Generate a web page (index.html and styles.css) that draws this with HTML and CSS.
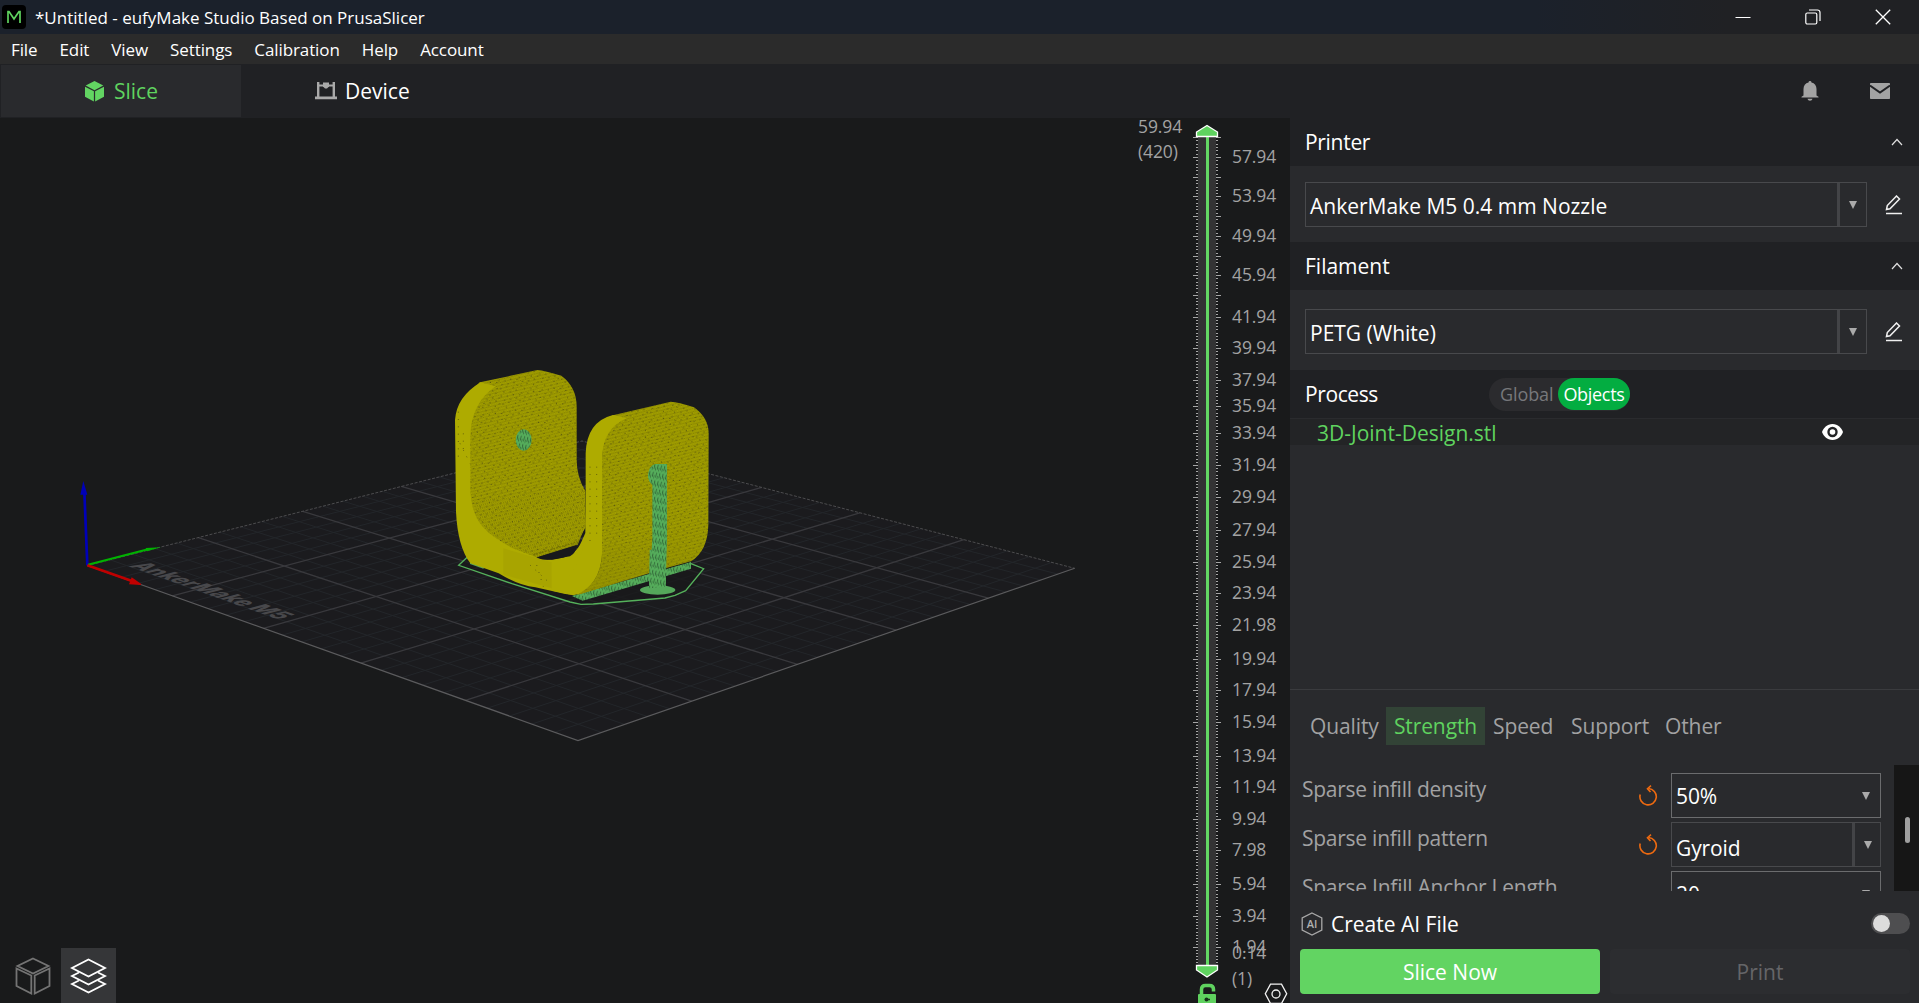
FILE: index.html
```
<!DOCTYPE html>
<html lang="en">
<head>
<meta charset="utf-8">
<title>*Untitled - eufyMake Studio Based on PrusaSlicer</title>
<link rel="stylesheet" href="styles.css">
</head>
<body>
<div class="app">
  <header class="titlebar">
    <svg class="logo" width="24" height="24" viewBox="0 0 24 24"><rect width="24" height="24" rx="4" fill="#000"/><path d="M6 18V6.500h1L12 14l5-7.500h1V18" fill="none" stroke="#5fd35f" stroke-width="1.700"/></svg>
    <span class="title">*Untitled - eufyMake Studio Based on PrusaSlicer</span>
    <div class="window-buttons">
      <svg width="16" height="16" viewBox="0 0 16 16"><path d="M0.500 8.500h15" stroke="#fff"/></svg>
      <svg width="16" height="16" viewBox="0 0 16 16" fill="none" stroke="#fff" stroke-width="1.200"><rect x=".8" y="4" width="11" height="11" rx="1.500"/><path d="M4 1h8.500a2.500 2.500 0 0 1 2.500 2.500V12"/></svg>
      <svg width="16" height="16" viewBox="0 0 16 16"><path d="M.8.8l14.400 14.400M15.200.8L.8 15.200" stroke="#fff" stroke-width="1.300"/></svg>
    </div>
  </header>
  <nav class="menubar">
    <span>File</span><span>Edit</span><span>View</span><span>Settings</span><span>Calibration</span><span>Help</span><span>Account</span>
  </nav>
  <div class="tabbar">
    <div class="tab tab-active">
      <svg width="19" height="21" viewBox="0 0 19 21" fill="#62d462"><path d="M9.500 0L18.300 4.600 9.500 9.200.7 4.600z"/><path d="M0 5.800l8.900 4.500V20.500L0 15.800z"/><path d="M19 5.800l-8.900 4.500V20.500l8.900-4.700z"/></svg>
      <span>Slice</span>
    </div>
    <div class="tab tab-device">
      <svg width="22" height="18" viewBox="0 0 22 18" fill="#a9a9a9"><path d="M2 0h2.400v15H2zM17.600 0H20v15h-2.400zM0 14.500h22v2.700H0zM3 2.600h16v2H3z"/><path d="M8 .5h6v4l-2 2h-2l-2-2z"/></svg>
      <span>Device</span>
    </div>
    <div class="tab-actions">
      <svg width="18" height="20" viewBox="0 0 18 20" fill="#a3a3a3"><path d="M9 0a1.500 1.500 0 0 1 1.500 1.400C13.700 2 15.500 4.500 15.500 8v6.500l2 1.300v.7H.5v-.7l2-1.300V8C2.500 4.500 4.300 2 7.500 1.400A1.500 1.500 0 0 1 9 0zM6.500 17.800h5c-.3 1.200-1.200 1.900-2.500 1.900s-2.200-.7-2.500-1.900z"/></svg>
      <svg width="20" height="16" viewBox="0 0 20 16"><rect width="20" height="16" rx=".8" fill="#a3a3a3"/><path d="M0 2.500l10 7 10-7" fill="none" stroke="#202124" stroke-width="1.900"/></svg>
    </div>
  </div>
  <main class="workspace">
    <section class="viewport">
      <svg class="scene" width="1290" height="885" viewBox="0 118 1290 885">
        <defs>
          <pattern id="dots" width="15" height="9" patternUnits="userSpaceOnUse" patternTransform="rotate(-14)">
            <rect width="15" height="9" fill="#a5a200"/>
            <path d="M0 0h3v3h-3zM5 0h3v3h-3zM10 0h3v3h-3z" fill="#827f00"/>
            <path d="M2.500 4.500h3v3h-3zM7.500 4.500h3v3h-3zM12.500 4.500h2.500v3h-2.500z" fill="#8b8800"/>
          </pattern>
          <pattern id="specks" width="62" height="47" patternUnits="userSpaceOnUse" patternTransform="rotate(-9)">
            <path d="M4 5h3v3h-3zM22 2h3v3h-3zM41 8h3v3h-3zM55 3h3v3h-3zM12 16h3v3h-3zM31 19h3v3h-3zM49 17h3v3h-3zM2 28h3v3h-3zM20 31h3v3h-3zM38 29h3v3h-3zM57 32h3v3h-3zM10 41h3v3h-3zM28 42h3v3h-3zM46 40h3v3h-3z" fill="#4d4a10"/>
          </pattern>
          <pattern id="shade" width="6" height="9" patternUnits="userSpaceOnUse" patternTransform="rotate(-14)">
            <rect width="6" height="9" fill="#a6a300"/><path d="M0 0h3v5H0zM4 5h2v3H4z" fill="#827f00"/>
          </pattern>
          <pattern id="mesh" width="10" height="24" patternUnits="userSpaceOnUse" patternTransform="rotate(12)">
            <rect width="10" height="24" fill="#55ad5b"/><path d="M0 2h3v15H0zM5 11h2v11H5z" fill="#356d3b"/>
          </pattern>
          <linearGradient id="fold" x1="0" y1="0" x2="0" y2="1"><stop offset="0" stop-color="#8a8700" stop-opacity="0"/><stop offset="1" stop-color="#8a8700" stop-opacity=".45"/></linearGradient>
        </defs>
        <path d="M87.300 565.500L582 441l492.700 127.300L578 740.500z" fill="#1b1b1e"/>
        <g id="bed-minor" stroke="#23262a" stroke-width="1"></g>
        <g id="bed-major" stroke="#39393d" stroke-width="1.300"></g>
        <path d="M87.300 565.500L582 441l492.700 127.300" fill="none" stroke="#4c4c4e" stroke-dasharray="3 1.500"/>
        <path d="M87.300 565.500L578 740.500l496.700-172.200" fill="none" stroke="#5b5b5d" stroke-width="1.200"/>
        <text class="bed-name" transform="matrix(.942 .335 -.969 .25 128 566)" textLength="160" lengthAdjust="spacingAndGlyphs">AnkerMake M5</text>
        <g transform="translate(60 460) scale(.33333)">
          <path d="M82 316L73 95" stroke="#0000b8" stroke-width="8"/><path d="M70 63l-9 41h21z" fill="#0000b8"/>
          <path d="M84 314l180-46" stroke="#00b400" stroke-width="6"/><path d="M257 264l46-2-42 12z" fill="#00b400"/>
          <path d="M82 316l136 48" stroke="#c00000" stroke-width="8"/><path d="M215 352l29 20-2 3-35-2z" fill="#c00000"/>
        </g>
        <g transform="translate(430 350) scale(.33333)">
          <path d="M122 612L85 648l115 36 220 72 30 7h40l215-19 60-17 40-30 16-44-42-15" fill="#19191b" opacity=".75"/>
          <path d="M122 612L86 646l160 55 174 55 33 7 37-1 215-18 30-8 32-14 54-66-40-16" fill="none" stroke="#55b15b" stroke-width="4"/>
          <path d="M120 630l50 14-10 12-40-14z" fill="#55a85b"/>
          <path d="M425 738l358-102v20L458 752z" fill="url(#mesh)"/>
          <path id="left-plate" d="M150 97L322 60q22 2 72 17 46 34 46 93v160q0 50 26 93v110l-28 50-118 38-80-2q-150-60-155-180V260q0-100 64-163z" fill="url(#dots)"/>
          <path d="M130 455Q250 420 462 425l5 100-24 60-120 36-60-12q-110-50-133-154z" fill="url(#shade)" opacity=".8"/>
          <use href="#left-plate" class="speckled"/>
          <path d="M160 100L322 60q22 2 72 17 46 34 46 93v160q0 50 26 93v110l-28 50-118 38-80-2q-150-60-155-180V260q0-100 64-163z" fill="url(#specks)"/>
          <path d="M152 97l45 12q-74 50-76 150v160c5 105 50 130 125 175l90 34 30 1c75-9 80-35 100-80l1-120V310q3-95 82-115l43 10q-72 30-76 120v280q-2 80-60 125-20 7-50 2l-90-20q-50-5-110-42l-85-30Q83 590 78 485L75 210q5-70 77-113z" fill="#aeab00"/>
          <path d="M320 623l120-38q-2 25-20 34l-50 9q-30 4-50-5z" fill="#18181c"/>
          <path d="M310 615l132-40" stroke="#777400" stroke-width="5" stroke-dasharray="5 4"/>
          <path d="M552 195l170-40q22 1 70 17 44 32 44 78l-1 275q-2 78-52 109l-75 20L440 736q70-35 76-120V325q0-70 36-130z" fill="url(#dots)"/>
          <path d="M552 195l170-40q22 1 70 17 44 32 44 78l-1 275q-2 78-52 109l-75 20L440 736q70-35 76-120V325q0-70 36-130z" fill="url(#specks)"/>
          <path d="M516 590l316-60q-6 78-60 106L442 734q72-46 74-144z" fill="url(#fold)"/>
          <path d="M552 195l38 10q-72 30-74 120v285q-5 100-86 126l-60-13q80-55 98-170V325q5-105 84-130z" fill="#aeab00"/>
          <path d="M220 595l145 42v78L220 674z" fill="#9f9c00" opacity=".4"/>
          <path d="M85 185v140M100 250v60M480 350v230M500 350v210M90 280l30 60M300 645l60 55M320 645l20 65" stroke="#67640a" stroke-width="3" stroke-dasharray="3 19"/>
          <ellipse cx="281" cy="270" rx="24" ry="32" fill="url(#mesh)"/>
          <path d="M676 342h35v230l-4 140q-26 16-48-2l8-145V405q-14-14-13-30 3-28 22-33z" fill="url(#mesh)"/>
          <ellipse cx="683" cy="720" rx="53" ry="14" fill="#55a85b"/>
          <path d="M659 600l48-10v120l-50 5z" fill="url(#mesh)"/>
        </g>
        <rect x="1198" y="137" width="18" height="828" fill="#333334"/>
        <g id="ruler-ticks" stroke="#a6a6a6" stroke-width="1"></g>
        <rect x="1206" y="137" width="3" height="828" fill="#64d864"/>
        <path d="M1196.500 136.500v-4.500l10.500-6.500 10.500 6.500v4.500z" fill="#5fd25f" stroke="#fff" stroke-width="1.300"/>
        <path d="M1196.500 965.500v4.500l10.500 7 10.500-7v-4.500z" fill="#5fd25f" stroke="#fff" stroke-width="1.300"/>
        <g class="scale-text" id="scale-text">
          <text x="1138" y="133">59.94</text><text x="1138" y="158">(420)</text>
          <text x="1232" y="959">0.14</text><text x="1232" y="985">(1)</text>
        </g>
        <g fill="none" stroke="#5fd25f" stroke-width="3.500"><path d="M1201.500 996v-6.500q0-4 4-4h4q4 0 4 4v2"/></g>
        <rect x="1198" y="994" width="18" height="12" rx="1" fill="#5fd25f"/><circle cx="1206.500" cy="999.500" r="2" fill="#17301a"/><path d="M1206.500 999.500h3.500" stroke="#17301a" stroke-width="1.500"/>
        <path d="M1270.500 984.200h11l5.200 9.600-5.200 9.700h-11l-5.200-9.700z" fill="none" stroke="#f2f2f2" stroke-width="1.300"/><circle cx="1276" cy="994" r="4" fill="none" stroke="#f2f2f2" stroke-width="1.300"/>
      </svg>
      <div class="view-modes">
        <div class="mode"><svg width="36" height="38" viewBox="0 0 36 38" fill="none" stroke="#747474" stroke-width="1.800"><path d="M18 1.500l15.500 7.500L18 16.500 2.500 9z"/><path d="M1.500 11.500L16.300 18.500v18L1.500 29z"/><path d="M34.500 11.500L19.700 18.500v18L34.500 29z"/></svg></div>
        <div class="mode mode-active"><svg width="37" height="36" viewBox="0 0 37 36" fill="none" stroke="#fff" stroke-width="1.800"><path d="M18.500 1.500L35 10l-16.500 8.500L2 10z"/><path d="M9 14.500L2 18l16.500 8.500L35 18l-7-3.500"/><path d="M9 22.500L2 26l16.500 8.500L35 26l-7-3.500"/></svg></div>
      </div>
    </section>
    <aside class="panel">
      <div class="section-head"><span>Printer</span><svg width="12" height="8" viewBox="0 0 12 8"><path d="M1 7l5-5.500L11 7" fill="none" stroke="#e0e0e0" stroke-width="1.200"/></svg></div>
      <div class="section-body printer-body">
        <div class="combo"><span>AnkerMake M5 0.4 mm Nozzle</span><i class="drop"></i></div>
        <svg class="edit" width="18" height="20" viewBox="0 0 18 20" fill="none" stroke="#f0f0f0" stroke-width="1.500"><path d="M1.500 14.500l.8-4L11.500 1l3 3-9.500 9.800z"/><path d="M1 18.500h16"/></svg>
      </div>
      <div class="section-head"><span class="h-filament">Filament</span><svg width="12" height="8" viewBox="0 0 12 8"><path d="M1 7l5-5.500L11 7" fill="none" stroke="#e0e0e0" stroke-width="1.200"/></svg></div>
      <div class="section-body filament-body">
        <div class="combo"><span>PETG (White)</span><i class="drop"></i></div>
        <svg class="edit" width="18" height="20" viewBox="0 0 18 20" fill="none" stroke="#f0f0f0" stroke-width="1.500"><path d="M1.500 14.500l.8-4L11.500 1l3 3-9.500 9.800z"/><path d="M1 18.500h16"/></svg>
      </div>
      <div class="section-head process-head"><span class="h-process">Process</span>
        <div class="scope"><span class="scope-global">Global</span><span class="scope-objects">Objects</span></div>
      </div>
      <div class="object-row"><span>3D-Joint-Design.stl</span>
        <svg width="21" height="16" viewBox="0 0 21 16"><path d="M10.500 0C16 0 19.500 4 21 8c-1.500 4-5 8-10.500 8S1.500 12 0 8c1.500-4 5-8 10.500-8z" fill="#fff"/><circle cx="10.500" cy="8" r="5.200" fill="#232426"/><circle cx="10.500" cy="8" r="2.800" fill="#fff"/></svg>
      </div>
      <div class="object-space"></div>
      <div class="param-tabs"><span class="p-quality">Quality</span><span class="p-strength">Strength</span><span class="p-speed">Speed</span><span class="p-support">Support</span><span>Other</span></div>
      <div class="params">
        <div class="param-list">
          <div class="param"><label>Sparse infill density</label>
            <svg class="reset" width="19" height="21" viewBox="0 0 19 21" fill="none" stroke="#ee6a10" stroke-width="1.600"><path d="M1.200 9.500A8.200 8.200 0 1 0 9.500 3.500"/><path d="M12 .7L8.500 3.700l3 3.300"/></svg>
            <div class="field field-edit"><span>50%</span><i class="drop"></i></div></div>
          <div class="param"><label>Sparse infill pattern</label>
            <svg class="reset" width="19" height="21" viewBox="0 0 19 21" fill="none" stroke="#ee6a10" stroke-width="1.600"><path d="M1.200 9.500A8.200 8.200 0 1 0 9.500 3.500"/><path d="M12 .7L8.500 3.700l3 3.300"/></svg>
            <div class="field"><span class="v-pattern">Gyroid</span><i class="drop"></i></div></div>
          <div class="param"><label>Sparse Infill Anchor Length</label>
            <div class="field field-edit"><span>20</span><i class="drop"></i></div></div>
        </div>
        <div class="scrollbar"><div class="thumb"></div></div>
      </div>
      <div class="ai-row">
        <svg width="22" height="24" viewBox="0 0 22 24"><path d="M11 1l9.800 5v12L11 23 1.200 18V6z" fill="none" stroke="#a8a8a8" stroke-width="1.300"/><text x="11" y="15.800" text-anchor="middle" class="ai-mark">AI</text></svg>
        <span>Create AI File</span>
        <div class="switch"><div class="knob"></div></div>
      </div>
      <div class="actions"><button class="slice-now">Slice Now</button><button class="print">Print</button></div>
    </aside>
  </main>
</div>
<script src="scene.js"></script>
</body>
</html>
```
FILE: styles.css
```
* { box-sizing: border-box; }
body { margin: 0; background: #191a1b; color: #fff; font-family: "Open Sans", "Noto Sans", sans-serif; }
svg { display: block; flex: none; }
.app { width: 1919px; height: 1003px; display: flex; flex-direction: column; overflow: hidden; white-space: nowrap; }
.titlebar { height: 34px; flex: none; display: flex; align-items: center; padding-left: 2px; background: linear-gradient(90deg, #1b212b 0, #1b212b 80%, #202124 90%); font-size: 17px; }
.title { margin-left: 9px; }
.window-buttons { margin-left: auto; display: flex; gap: 54px; padding-right: 28px; }
.menubar { height: 30px; flex: none; display: flex; align-items: center; gap: 22px; padding-left: 11px; background: #2b2b2b; font-size: 17px; letter-spacing: -.1px; }
.tabbar { height: 54px; flex: none; display: flex; align-items: center; padding: 1px; background: #202124; font-size: 21px; }
.tab { width: 240px; height: 52px; display: flex; align-items: center; gap: 10px; padding-left: 84px; }
.tab-active { background: #292a2d; color: #5fd35f; }
.tab-device { padding-left: 74px; gap: 8px; }
.tab-actions { margin-left: auto; display: flex; align-items: center; gap: 51px; padding-right: 28px; }
.workspace { flex: 1; display: flex; min-height: 0; }
.viewport { width: 1290px; position: relative; background: #191a1b; }
.speckled { opacity: 0; }
.bed-name { font: 800 25px Inter, sans-serif; fill: #48484b; }
.scale-text { font-size: 17.500px; fill: #a3a3a3; letter-spacing: -.1px; }
.view-modes { position: absolute; left: 6px; bottom: 0; display: flex; }
.mode { width: 55px; height: 55px; display: flex; align-items: center; justify-content: center; }
.mode:first-child { padding-right: 2px; }
.mode-active { background: #353638; }
.panel { width: 629px; background: #292a2d; display: flex; flex-direction: column; font-size: 21px; letter-spacing: -.1px; }
.section-head { height: 48px; flex: none; padding: 0 16px 0 15px; display: flex; align-items: center; justify-content: space-between; background: #202124; letter-spacing: -.3px; }
.section-head .h-filament { letter-spacing: 0; }
.section-body { flex: none; display: flex; align-items: center; padding-left: 15px; }
.printer-body { height: 76px; padding-top: 1px; }
.filament-body { height: 80px; padding-top: 3px; }
.combo { width: 562px; height: 45px; border: 1px solid #48494c; display: flex; align-items: center; justify-content: space-between; padding-left: 4px; letter-spacing: 0; }
.combo span { padding-top: 2px; }
.drop { align-self: stretch; width: 29px; border-left: 3px solid #434447; display: flex; align-items: center; justify-content: center; }
.drop::before { content: ""; border: 4px solid transparent; border-top: 8px solid #aaa; border-bottom: 0; }
.edit { margin-left: 18px; }
.process-head { height: 49px; justify-content: flex-start; border-bottom: 1px solid #2a2b2e; }
.scope { width: 141px; height: 33px; margin-left: 111px; display: flex; align-items: center; border-radius: 17px; background: #2b2b2e; font-size: 18px; letter-spacing: -.1px; }
.h-process { width: 73px; letter-spacing: -.4px; }
.scope-global { width: 69px; padding-left: 11px; color: #77787b; }
.scope-objects { width: 72px; height: 32px; display: flex; align-items: center; justify-content: center; border-radius: 16px; background: #03ad41; letter-spacing: -.3px; }
.object-row { height: 26px; flex: none; display: flex; align-items: center; justify-content: space-between; padding: 0 76px 0 27px; color: #5fd35f; background: #232426; letter-spacing: 0; }
.object-row span { padding-top: 2px; }
.object-space { height: 245px; flex: none; border-bottom: 1px solid #3a3b3e; }
.param-tabs { height: 75px; flex: none; display: flex; align-items: center; padding: 0 0 4px 20px; color: #a2a2a3; }
.p-quality { width: 76px; }
.p-strength { width: 99px; height: 38px; display: flex; align-items: center; justify-content: center; color: #5fd35f; background: #324336; }
.p-speed { margin-left: 8px; width: 78px; }
.p-support { width: 94px; }
.params { height: 126px; flex: none; display: flex; overflow: hidden; }
.param-list { width: 604px; padding: 8px 13px 0 12px; }
.param { height: 49px; display: flex; align-items: flex-start; }
.param label { width: 337px; padding-top: 2px; color: #a2a2a3; letter-spacing: -.25px; }
.reset { margin-top: 12px; }
.field { width: 210px; height: 45px; margin-left: auto; border: 1px solid #48494c; display: flex; align-items: center; justify-content: space-between; padding-left: 4px; }
.field .drop { width: 28px; }
.field-edit { border-color: #6b6c6e; }
.field-edit .drop { border: 0; }
.field .v-pattern { padding-top: 6px; }
.scrollbar { width: 25px; background: #161616; padding: 52px 0 0 11px; }
.thumb { width: 5px; height: 26px; border-radius: 3px; background: #a0a0a0; }
.ai-row { height: 58px; flex: none; display: flex; align-items: center; padding: 7px 9px 0 11px; letter-spacing: 0; }
.ai-row > span { margin-left: 8px; padding-top: 1px; }
.ai-mark { font: 600 11px "Open Sans", sans-serif; fill: #b0b0b0; }
.switch { width: 39px; height: 21px; margin-left: auto; border-radius: 11px; background: #4e4e50; padding: 2px; }
.knob { width: 17px; height: 17px; border-radius: 9px; background: #dcdcdc; }
.actions { display: flex; gap: 10px; padding-left: 10px; }
button { width: 300px; height: 45px; border: 0; border-radius: 4px; font: inherit; letter-spacing: 0; padding: 0; }
.slice-now { background: #62d462; color: #fff; }
.print { background: #2c2d30; color: #656568; }
```
FILE: scene.js
```
const NS = 'http://www.w3.org/2000/svg';
const line = (parent, x1, y1, x2, y2) => {
  const el = document.createElementNS(NS, 'line');
  el.setAttribute('x1', x1); el.setAttribute('y1', y1);
  el.setAttribute('x2', x2); el.setAttribute('y2', y2);
  parent.appendChild(el);
};

// Perspective projection of the unit bed onto the viewport.
const p0 = [87.3, 565.5], p1 = [578, 740.5], p2 = [1074.7, 568.3], p3 = [582, 441];
const dx1 = p1[0] - p2[0], dx2 = p3[0] - p2[0], sx = p0[0] - p1[0] + p2[0] - p3[0];
const dy1 = p1[1] - p2[1], dy2 = p3[1] - p2[1], sy = p0[1] - p1[1] + p2[1] - p3[1];
const det = dx1 * dy2 - dx2 * dy1;
const g = (sx * dy2 - dx2 * sy) / det, h = (dx1 * sy - sx * dy1) / det;
const project = (u, v) => {
  const w = g * u + h * v + 1;
  return [0, 1].map(i =>
    ((p1[i] - p0[i] + g * p1[i]) * u + (p3[i] - p0[i] + h * p3[i]) * v + p0[i]) / w);
};
for (let i = 1; i < 25; i++) {
  const group = document.getElementById(i % 5 ? 'bed-minor' : 'bed-major');
  line(group, ...project(i / 25, 0), ...project(i / 25, 1));
  line(group, ...project(0, i / 25), ...project(1, i / 25));
}

// Layer ruler: [y, label]
const marks = [[137], [157, '57.94'], [177], [196, '53.94'], [216], [236, '49.94'], [256], [275, '45.94'],
  [295], [317, '41.94'], [348, '39.94'], [380, '37.94'], [406, '35.94'], [433, '33.94'], [465, '31.94'],
  [497, '29.94'], [530, '27.94'], [562, '25.94'], [593, '23.94'], [625, '21.98'], [659, '19.94'],
  [690, '17.94'], [722, '15.94'], [756, '13.94'], [787, '11.94'], [819, '9.94'], [850, '7.98'],
  [884, '5.94'], [916, '3.94'], [947, '1.94'], [965]];
const ticks = document.getElementById('ruler-ticks');
const scale = document.getElementById('scale-text');
marks.forEach(([y, label], i) => {
  if (i < marks.length - 1) {
    line(ticks, 1193, y + .5, 1198, y + .5);
    line(ticks, 1216, y + .5, 1221, y + .5);
    const span = marks[i + 1][0] - y, n = Math.round(span / 3.2);
    for (let k = 1; k < n; k++) {
      const t = Math.round(y + span * k / n) + .5;
      line(ticks, 1196, t, 1198, t);
      line(ticks, 1216, t, 1218, t);
    }
  }
  if (label) {
    const el = document.createElementNS(NS, 'text');
    el.setAttribute('x', 1232); el.setAttribute('y', y + 6);
    el.textContent = label;
    scale.appendChild(el);
  }
});
```
